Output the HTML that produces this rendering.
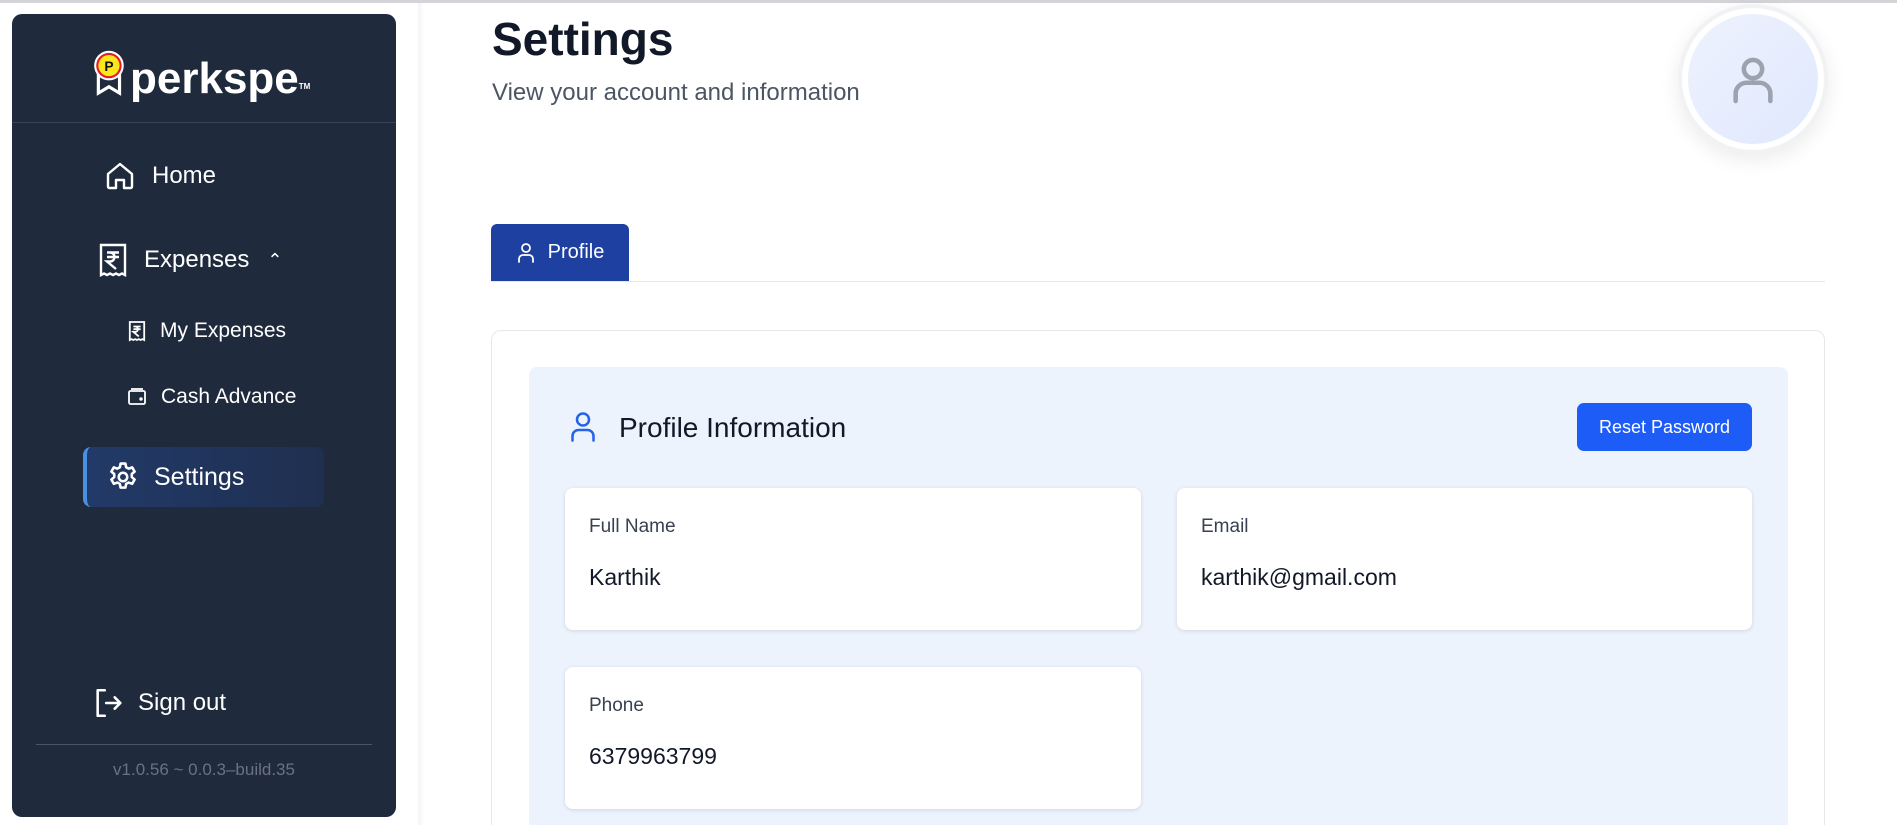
<!DOCTYPE html><html style="overflow:hidden"><head><style>
*{box-sizing:border-box;margin:0;padding:0}
html,body{width:1897px;height:825px;overflow:hidden}
body{background:#fff;font-family:"Liberation Sans",sans-serif;position:relative}
.topline{position:absolute;left:0;top:0;width:1897px;height:3px;background:#d4d4d8}
.side{position:absolute;left:12px;top:14px;width:384px;height:803px;background:#1f2a3d;border-radius:10px;color:#fff;overflow:hidden}
.side .div1{position:absolute;left:0;right:0;top:108px;height:1px;background:#34425a}
.nav{position:absolute;display:flex;align-items:center;color:#fff}
.mainsh{position:absolute;left:418px;top:3px;width:6px;height:822px;background:linear-gradient(90deg,#f3f4f6,#fff)}
.abs{position:absolute}
.field{position:absolute;background:#fff;border-radius:8px;box-shadow:0 1px 4px rgba(0,0,0,.12)}
.field .l{position:absolute;left:24px;top:28px;font-size:19px;color:#374151}
.field .v{position:absolute;left:24px;top:76px;font-size:23px;color:#111827}
</style></head><body>
<div class="topline"></div>
<div class="side">
 <div class="abs" style="left:80px;top:34px;width:36px;height:50px">
  <svg width="36" height="50" viewBox="0 0 34 46"><path d="M6 24 L6 42 L16 36 L26 42 L26 24" fill="none" stroke="#fff" stroke-width="3"/><circle cx="16" cy="16" r="14" fill="#fff"/><circle cx="16" cy="16" r="12" fill="#e11d2a"/><circle cx="16" cy="16" r="10" fill="#fde61a"/><text x="16" y="21" font-size="13" font-weight="bold" text-anchor="middle" fill="#111" font-family="Liberation Sans">P</text></svg>
 </div>
 <div class="abs" style="left:118px;top:40px;font-size:44px;font-weight:bold;letter-spacing:0px;line-height:50px">perkspe<sup style="font-size:8px;vertical-align:top;position:relative;top:8px">TM</sup></div>
 <div class="div1"></div>
 <div class="nav" style="left:92px;top:146px;font-size:24px">
  <svg width="32" height="32" viewBox="0 0 24 24" fill="none" stroke="#fff" stroke-width="1.8" stroke-linejoin="round"><path d="M3 10.5 12 3l9 7.5V20a1 1 0 0 1-1 1h-5v-6h-6v6H4a1 1 0 0 1-1-1z"/></svg>
  <span style="margin-left:16px">Home</span></div>
 <div class="nav" style="left:86px;top:228px;font-size:24px">
  <svg width="30" height="36" viewBox="0 0 20 24" fill="none" stroke="#fff" stroke-width="1.6"><path d="M2 2h16v20l-2-1-2 1-2-1-2 1-2-1-2 1-2-1-2 1z"/><path d="M6 7h8M6 10h8M8 7c4 0 4 6 0 6h-2l6 5"/></svg>
  <span style="margin-left:16px">Expenses</span><span style="margin-left:18px;font-size:18px">&#8963;</span></div>
 <div class="nav" style="left:116px;top:305px;font-size:21px">
  <svg width="18" height="22" viewBox="0 0 20 24" fill="none" stroke="#fff" stroke-width="2"><path d="M2 2h16v20l-2-1-2 1-2-1-2 1-2-1-2 1-2-1-2 1z"/><path d="M6 7h8M6 10h8M8 7c4 0 4 6 0 6h-2l6 5"/></svg>
  <span style="margin-left:14px">My Expenses</span></div>
 <div class="nav" style="left:115px;top:371px;font-size:21px">
  <svg width="20" height="20" viewBox="0 0 20 20" fill="none" stroke="#fff" stroke-width="1.8"><rect x="2" y="4" width="16" height="13" rx="1.5"/><path d="M4 2h12"/><circle cx="14" cy="12" r="0.8" fill="#fff"/></svg>
  <span style="margin-left:14px">Cash Advance</span></div>
 <div class="abs" style="left:71px;top:433px;width:241px;height:60px;border-radius:8px;background:linear-gradient(90deg,#223a68,#1f2f50);border-left:4px solid #4a90e2"></div>
 <div class="nav" style="left:94px;top:446px;font-size:25px">
  <svg width="34" height="34" viewBox="0 0 24 24" fill="none" stroke="#fff" stroke-width="1.8"><circle cx="12" cy="12" r="3"/><path d="M10.3 2.5h3.4l.5 2.6 1.8 1 2.5-.9 1.7 3-2 1.7v2.2l2 1.7-1.7 3-2.5-.9-1.8 1-.5 2.6h-3.4l-.5-2.6-1.8-1-2.5.9-1.7-3 2-1.7v-2.2l-2-1.7 1.7-3 2.5.9 1.8-1z" stroke-linejoin="round"/></svg>
  <span style="margin-left:14px">Settings</span></div>
 <div class="nav" style="left:80px;top:672px;font-size:24px">
  <svg width="34" height="34" viewBox="0 0 24 24" fill="none" stroke="#fff" stroke-width="1.8" stroke-linecap="round" stroke-linejoin="round"><path d="M9 3H4v18h5M10 12h10M16 8l4 4-4 4"/></svg>
  <span style="margin-left:12px">Sign out</span></div>
 <div class="abs" style="left:24px;right:24px;top:730px;height:1px;background:#4b5566"></div>
 <div class="abs" style="left:0;right:0;top:746px;text-align:center;font-size:17px;color:#6b7280">v1.0.56 ~ 0.0.3–build.35</div>
</div>
<div class="mainsh"></div>
<div class="abs" style="left:492px;top:12px;font-size:46px;font-weight:bold;color:#111827">Settings</div>
<div class="abs" style="left:492px;top:79px;font-size:24px;color:#4b5563">View your account and information</div>
<div class="abs" style="left:1678px;top:4px;width:150px;height:150px;border-radius:50%;background:#f1f2f4;box-shadow:0 6px 20px rgba(0,0,0,.08)"></div>
<div class="abs" style="left:1682px;top:8px;width:142px;height:142px;border-radius:50%;background:#fff"></div>
<div class="abs" style="left:1688px;top:14px;width:130px;height:130px;border-radius:50%;background:linear-gradient(135deg,#edf2fd,#e0e8fd)"></div>
<svg class="abs" style="left:1732px;top:54px" width="42" height="52" viewBox="0 0 46 54" fill="none" stroke="#9ca3af" stroke-width="5" stroke-linecap="round"><circle cx="23" cy="15" r="10"/><path d="M4 50V42a12 12 0 0 1 12-12h14a12 12 0 0 1 12 12v8"/></svg>
<div class="abs" style="left:491px;top:224px;width:138px;height:57px;background:#1e40a0;border-radius:6px 6px 0 0;color:#fff;font-size:20px;display:flex;align-items:center;justify-content:center">
 <svg width="20" height="22" viewBox="0 0 20 22" fill="none" stroke="#fff" stroke-width="1.8" stroke-linecap="round"><circle cx="10" cy="6" r="4"/><path d="M3 20v-3a4 4 0 0 1 4-4h6a4 4 0 0 1 4 4v3"/></svg><span style="margin-left:12px">Profile</span></div>
<div class="abs" style="left:491px;top:281px;width:1334px;height:1px;background:#e5e7eb"></div>
<div class="abs" style="left:491px;top:330px;width:1334px;height:510px;border:1px solid #e5e7eb;border-radius:10px;background:#fff"></div>
<div class="abs" style="left:529px;top:367px;width:1259px;height:470px;border-radius:8px;background:#edf3fd"></div>
<svg class="abs" style="left:568px;top:410px" width="30" height="34" viewBox="0 0 20 22" fill="none" stroke="#2563eb" stroke-width="1.7" stroke-linecap="round"><circle cx="10" cy="6" r="4"/><path d="M3 20v-3a4 4 0 0 1 4-4h6a4 4 0 0 1 4 4v3"/></svg>
<div class="abs" style="left:619px;top:412px;font-size:28px;color:#111827">Profile Information</div>
<div class="abs" style="left:1577px;top:403px;width:175px;height:48px;border-radius:7px;background:#1d5cf6;color:#fff;font-size:18px;display:flex;align-items:center;justify-content:center">Reset Password</div>
<div class="field" style="left:565px;top:488px;width:576px;height:142px"><div class="l">Full Name</div><div class="v">Karthik</div></div>
<div class="field" style="left:1177px;top:488px;width:575px;height:142px"><div class="l">Email</div><div class="v">karthik@gmail.com</div></div>
<div class="field" style="left:565px;top:667px;width:576px;height:142px"><div class="l">Phone</div><div class="v">6379963799</div></div>
</body></html>
